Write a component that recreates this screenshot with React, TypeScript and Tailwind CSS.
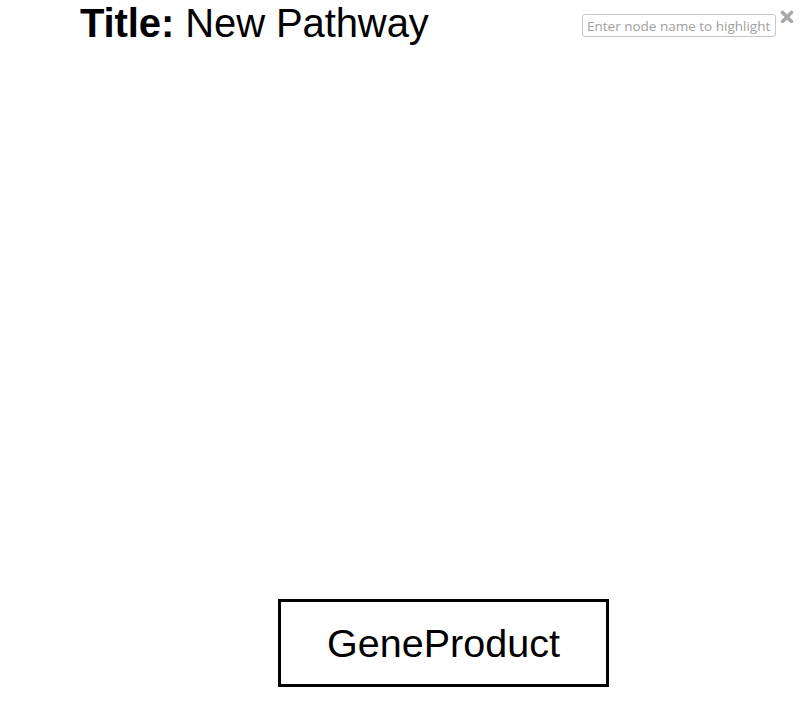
import React from "react";

export default function App() {
  return (
    <div className="relative h-[728px] w-[800px] overflow-hidden bg-white font-['Liberation_Sans',Arial,sans-serif] text-black">
      <div className="flex items-start justify-between">
        <h1 className="pl-[80px] text-[40px] leading-[46px] tracking-[-0.1px]">
          <span className="font-bold">Title:</span> New Pathway
        </h1>
        <div className="flex items-start gap-[4px] pt-[14px] pr-[6px]">
          <input
            type="text"
            placeholder="Enter node name to highlight"
            className="h-[23px] w-[194px] rounded-[3px] border border-[#c8c8c8] px-[4px] font-['Open_Sans',sans-serif] text-[13.5px] text-gray-600 placeholder:text-[#a0a0a0] focus:outline-none"
          />
          <svg width="14" height="14" viewBox="0 0 14 14" className="mt-[-5px]">
            <path d="M2.5 3.5 L11.5 12.5 M11.5 3.5 L2.5 12.5" stroke="#a8a8a8" strokeWidth="3.6" strokeLinecap="round" />
          </svg>
        </div>
      </div>

      {/* diagram node */}
      <div className="absolute left-[278px] top-[599px] flex h-[88px] w-[331px] items-center justify-center border-[3px] border-black pt-[2px]">
        <span className="text-[39.5px] leading-none">GeneProduct</span>
      </div>
    </div>
  );
}
